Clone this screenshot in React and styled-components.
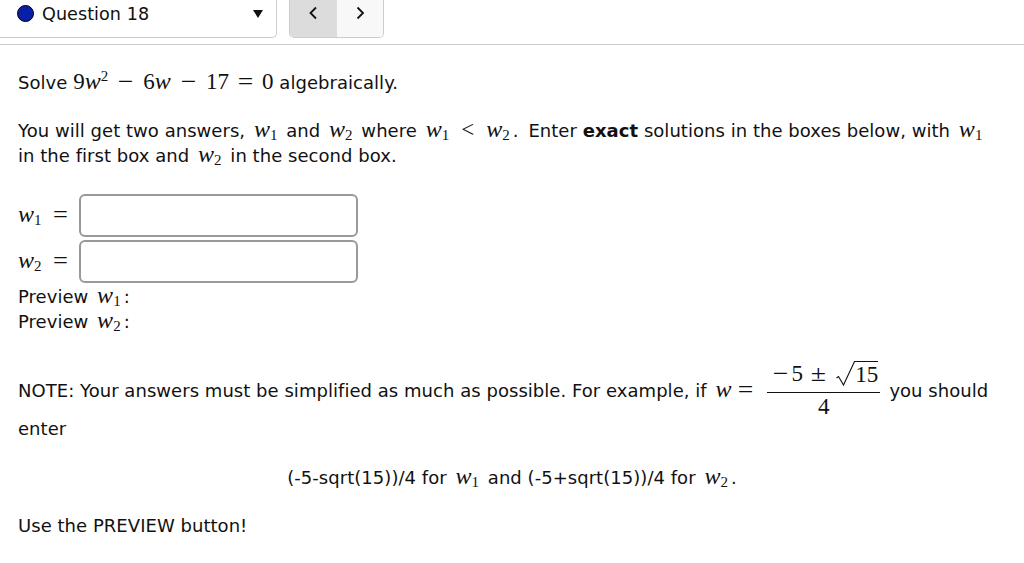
import styled, { createGlobalStyle } from 'styled-components';

const GlobalStyle = createGlobalStyle`
  html, body { margin: 0; padding: 0; background: #fff; }
  body {
    font-family: "DejaVu Sans", "Noto Sans", sans-serif;
    font-size: 18px;
    line-height: 25px;
    letter-spacing: 0.04px;
    color: #111;
    overflow: hidden;
  }
`;

const Page = styled.div`
  width: 1024px;
  height: 563px;
  overflow: hidden;
`;

const TopBar = styled.header`
  display: flex;
  gap: 12px;
  height: 44px;
  border-bottom: 1px solid #ccc;
`;

const QuestionSelect = styled.div`
  width: 277px;
  height: 38px;
  box-sizing: border-box;
  display: flex;
  align-items: center;
  padding: 0 12px 10px 17px;
  gap: 8px;
  background: #fff;
  border: 1px solid #ccc;
  border-width: 0 1px 1px 0;
  border-radius: 0 0 5px 0;
  font-size: 17.6px;
`;

const QuestionLabel = styled.span`
  margin-top: 2px;
`;

const StatusDot = styled.span`
  width: 15px;
  height: 15px;
  border-radius: 50%;
  background: #0a1fa8;
  border: 1.5px solid #000;
`;

const Caret = styled.span`
  margin-left: auto;
  margin-right: 1px;
  width: 0;
  height: 0;
  border-left: 5.5px solid transparent;
  border-right: 5.5px solid transparent;
  border-top: 8px solid #111;
`;

const NavGroup = styled.div`
  display: flex;
  height: 38px;
  box-sizing: border-box;
  border: 1px solid #ccc;
  border-top: none;
  border-radius: 0 0 5px 5px;
  overflow: hidden;
`;

const NavButton = styled.button`
  width: 46.5px;
  padding: 0 0 12px;
  border: none;
  background: ${(p) => (p.$active ? '#dcdcdc' : '#f8f8f8')};
  display: flex;
  align-items: center;
  justify-content: center;
`;

const Content = styled.main`
  padding: 25px 18px 0;
`;

const Para = styled.p`
  margin: 0 0 ${(p) => p.$after || 0}px;
  text-align: ${(p) => p.$align || 'left'};
  white-space: nowrap;
`;

const Math = styled.span`
  font-family: "Liberation Serif", serif;
  font-size: 23px;
  line-height: 0;
  white-space: nowrap;
`;

const MathVar = styled.i`
  font-family: "Liberation Serif", serif;
  font-size: 24px;
  line-height: 0;
`;

const InlineVar = styled.span`
  margin: 0 ${(p) => (p.$flush ? 0 : 3)}px;
`;

const Sentence = styled.span`
  margin-left: 4px;
`;

const Sub = styled.sub`
  font-family: "Liberation Serif", serif;
  font-style: normal;
  font-size: 15px;
  line-height: 0;
  vertical-align: -3px;
`;

const Sup = styled.sup`
  font-family: "Liberation Serif", serif;
  font-size: 15px;
  line-height: 0;
  vertical-align: 8px;
`;

const Op = styled.span`
  display: inline-block;
  line-height: 0;
  margin: 0 ${(p) => p.$gap ?? 8}px;
  transform: scaleX(${(p) => p.$stretch || 1});
`;

const AnswerRow = styled.div`
  display: flex;
  align-items: center;
  height: 43px;
  margin-bottom: ${(p) => p.$after ?? 3}px;
`;

const AnswerLabel = styled.label`
  width: 61px;
  flex: none;
`;

const AnswerInput = styled.input`
  width: 279px;
  height: 43px;
  box-sizing: border-box;
  border: 2px solid #999;
  border-radius: 6px;
  background: #fff;
`;

const Note = styled.div`
  display: flex;
  align-items: center;
  height: 52px;
  white-space: nowrap;
`;

const Fraction = styled.span`
  display: inline-flex;
  flex-direction: column;
  align-items: stretch;
  margin: 0 9px 0 10.5px;
  font-family: "Liberation Serif", serif;
  font-size: 23px;
`;

const Numer = styled.span`
  height: 32px;
  box-sizing: border-box;
  padding: 0 2px 4px 5px;
  display: flex;
  align-items: center;
  border-bottom: 1px solid #111;
`;

const Denom = styled.span`
  height: 27px;
  line-height: 28px;
  text-align: center;
`;

const Radical = styled.svg`
  flex: none;
  align-self: flex-start;
  margin-left: 5px;
`;

const Root = styled.span`
  align-self: flex-start;
  border-top: 1px solid #111;
  line-height: 25px;
`;

const W = ({ n, flush }) => (
  <InlineVar $flush={flush}>
    <MathVar>w</MathVar>
    {n && <Sub>{n}</Sub>}
  </InlineVar>
);

const Chevron = ({ d }) => (
  <svg width="16" height="16" viewBox="0 0 16 16" fill="none" stroke="#111" strokeWidth="1.8">
    <path d={d} />
  </svg>
);

export default function App() {
  return (
    <Page>
      <GlobalStyle />
      <TopBar>
        <QuestionSelect>
          <StatusDot />
          <QuestionLabel>Question 18</QuestionLabel>
          <Caret />
        </QuestionSelect>
        <NavGroup>
          <NavButton $active>
            <Chevron d="M11 2.5 L5.5 8 L11 13.5" />
          </NavButton>
          <NavButton>
            <Chevron d="M5.5 2.5 L11 8 L5.5 13.5" />
          </NavButton>
        </NavGroup>
      </TopBar>
      <Content>
        <Para $after={23}>
          Solve{' '}
          <Math>
            9<MathVar>w</MathVar>
            <Sup>2</Sup>
            <Op $gap={11} $stretch={1.2}>−</Op>6<MathVar>w</MathVar>
            <Op $gap={11} $stretch={1.2}>−</Op>17<Op $gap={10} $stretch={1.2}>=</Op>0
          </Math>{' '}
          algebraically.
        </Para>
        <Para>
          You will get two answers, <W n="1" /> and <W n="2" /> where <W n="1" />
          <Op $gap={9}><Math>&lt;</Math></Op>
          <W n="2" />. <Sentence>Enter</Sentence> <strong>exact</strong> solutions in the boxes below, with <W n="1" />
        </Para>
        <Para $after={26}>
          in the first box and <W n="2" /> in the second box.
        </Para>
        <AnswerRow>
          <AnswerLabel>
            <W n="1" flush /> <Op $gap={7} $stretch={1.15}><Math>=</Math></Op>
          </AnswerLabel>
          <AnswerInput aria-label="w1" />
        </AnswerRow>
        <AnswerRow $after={1}>
          <AnswerLabel>
            <W n="2" flush /> <Op $gap={7} $stretch={1.15}><Math>=</Math></Op>
          </AnswerLabel>
          <AnswerInput aria-label="w2" />
        </AnswerRow>
        <Para>
          Preview <W n="1" />:
        </Para>
        <Para $after={30}>
          Preview <W n="2" />:
        </Para>
        <Note>
          NOTE: Your answers must be simplified as much as possible. For example, if&nbsp;
          <W />
          <Op $gap={4.5} $stretch={1.2}><Math>=</Math></Op>
          <Fraction>
            <Numer>
              <Op $gap={2} $stretch={1.2}>−</Op>
              <Op $gap={2.5}>5</Op>
              <Op $gap={6.5} $stretch={1.2}>±</Op>
              <Radical width="19" height="26" viewBox="0 0 19 26" fill="none" stroke="#111">
                <path d="M0.5 17 L2.5 15.5 L7.5 24 L18.5 0.5 L19 0.5" strokeWidth="1.1" />
              </Radical>
              <Root>15</Root>
            </Numer>
            <Denom>4</Denom>
          </Fraction>
          you should
        </Note>
        <Para $after={24}>enter</Para>
        <Para $align="center" $after={23}>
          (-5-sqrt(15))/4 for <W n="1" /> and (-5+sqrt(15))/4 for <W n="2" />.
        </Para>
        <Para>Use the PREVIEW button!</Para>
      </Content>
    </Page>
  );
}
